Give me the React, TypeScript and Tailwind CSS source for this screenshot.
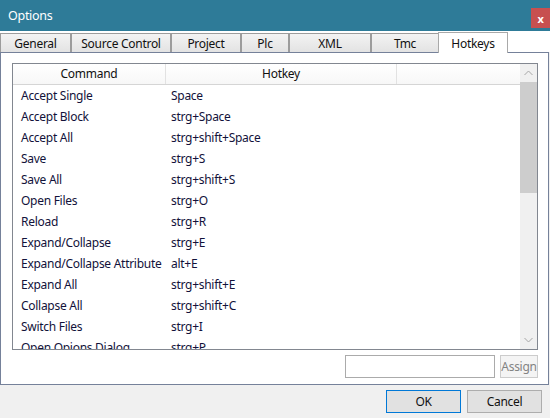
import React from "react";

const rows: [string, string][] = [
  ["Accept Single", "Space"],
  ["Accept Block", "strg+Space"],
  ["Accept All", "strg+shift+Space"],
  ["Save", "strg+S"],
  ["Save All", "strg+shift+S"],
  ["Open Files", "strg+O"],
  ["Reload", "strg+R"],
  ["Expand/Collapse", "strg+E"],
  ["Expand/Collapse Attribute", "alt+E"],
  ["Expand All", "strg+shift+E"],
  ["Collapse All", "strg+shift+C"],
  ["Switch Files", "strg+I"],
  ["Open Opions Dialog", "strg+P"],
];

const tabs: { label: string; w: string; active?: boolean }[] = [
  { label: "General", w: "w-[70px]" },
  { label: "Source Control", w: "w-[100px]" },
  { label: "Project", w: "w-[70px]" },
  { label: "Plc", w: "w-[48px]" },
  { label: "XML", w: "w-[82px]" },
  { label: "Tmc", w: "w-[68px]" },
  { label: "Hotkeys", w: "w-[70px]", active: true },
];

export default function App() {
  return (
    <div
      className="w-[550px] h-[418px] bg-[#f0f0f0] flex flex-col overflow-hidden text-[12px] tracking-[-0.28px] text-black"
      style={{ fontFamily: '"Segoe UI", "Noto Sans", "Open Sans", sans-serif' }}
    >
      {/* Title bar */}
      <div className="h-[31px] bg-[#2e7b98] flex items-start justify-between shrink-0">
        <div className="text-white text-[12.5px] pl-[8px] pt-[8px] leading-[16px]">Options</div>
        <div className="mt-[8px] w-[19px] h-[20px] bg-[#c75050] text-white text-[11px] font-bold flex items-center justify-center leading-none">
          x
        </div>
      </div>

      {/* Tabs */}
      <div className="h-[21px] bg-white flex items-end shrink-0 relative">
        {tabs.map((t) =>
          t.active ? (
            <div
              key={t.label}
              className={`${t.w} h-[21px] bg-white border border-b-0 border-[#a9a9a9] flex items-center justify-center relative top-[1px] z-10 text-[#111] pt-[1px]`}
            >
              {t.label}
            </div>
          ) : (
            <div
              key={t.label}
              className={`${t.w} h-[19px] bg-gradient-to-b from-[#f3f3f3] to-[#e3e3e3] border-l-2 border-t border-[#9c9c9c] first:border-l flex items-center justify-center text-[#111] pt-[1px]`}
            >
              {t.label}
            </div>
          )
        )}
      </div>

      {/* Panel */}
      <div className="h-[333px] mr-[1px] bg-white border border-[#75819a] flex flex-col pl-[11px] pr-[10px] pt-[10px] shrink-0">
        {/* Grid */}
        <div className="h-[287px] border border-[#828790] flex overflow-hidden">
          <div className="flex-1 flex flex-col overflow-hidden">
            <div className="h-[21px] flex border-b border-[#d5d5d5] bg-gradient-to-b from-white to-[#f7f7f7] shrink-0">
              <div className="w-[153px] flex items-center justify-center border-r border-[#e2e2e2] text-[#111]">Command</div>
              <div className="w-[231px] flex items-center justify-center border-r border-[#e2e2e2] text-[#111]">Hotkey</div>
              <div className="flex-1" />
            </div>
            <div className="flex flex-col">
              {rows.map(([c, h]) => (
                <div key={c} className="h-[21px] flex items-center text-[#12123a] shrink-0">
                  <div className="w-[158px] pl-[8px] whitespace-nowrap">{c}</div>
                  <div className="whitespace-nowrap">{h}</div>
                </div>
              ))}
            </div>
          </div>
          {/* Scrollbar */}
          <div className="w-[17px] bg-[#f0f0f0] flex flex-col shrink-0">
            <div className="h-[18px] flex items-center justify-center">
              <svg width="9" height="6" viewBox="0 0 9 6">
                <path d="M0.5 5 L4.5 1 L8.5 5" fill="none" stroke="#a6a6a6" strokeWidth="1" />
              </svg>
            </div>
            <div className="h-[111px] bg-[#cdcdcd]" />
            <div className="flex-1" />
            <div className="h-[18px] flex items-center justify-center">
              <svg width="9" height="6" viewBox="0 0 9 6">
                <path d="M0.5 1 L4.5 5 L8.5 1" fill="none" stroke="#a6a6a6" strokeWidth="1" />
              </svg>
            </div>
          </div>
        </div>
        {/* Input row */}
        <div className="flex justify-end mt-[5px] gap-[5px]">
          <div className="w-[150px] h-[23px] border border-[#ababab] bg-white" />
          <div className="w-[38px] h-[23px] border border-[#cccccc] bg-[#f4f4f4] text-[#838383] flex items-center justify-center">
            Assign
          </div>
        </div>
      </div>

      {/* Bottom buttons */}
      <div className="flex justify-end gap-[6px] pt-[5px] pr-[8px]">
        <div className="w-[75px] h-[23px] border border-[#0078d7] bg-[#e1e1e1] flex items-center justify-center text-[#111]">OK</div>
        <div className="w-[75px] h-[23px] border border-[#adadad] bg-[#e1e1e1] flex items-center justify-center text-[#111]">Cancel</div>
      </div>
    </div>
  );
}
